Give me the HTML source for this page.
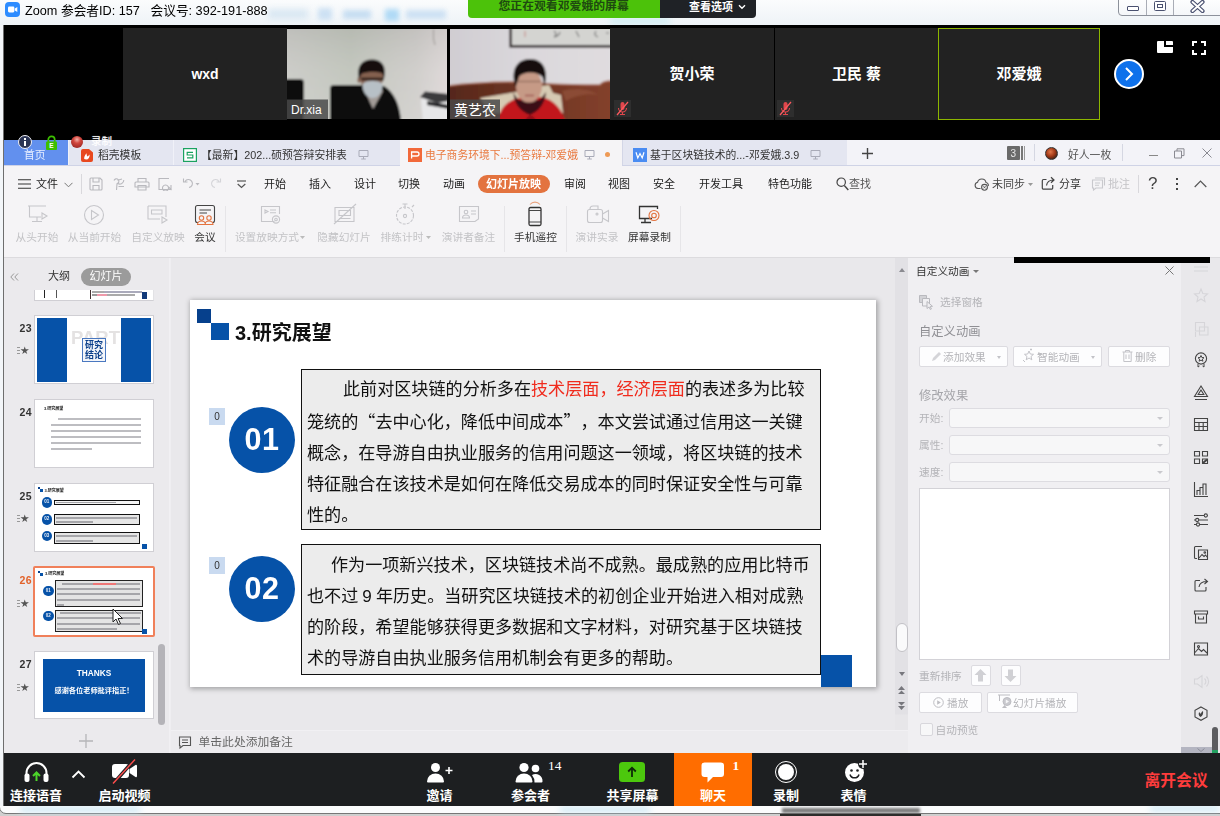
<!DOCTYPE html>
<html lang="zh-CN">
<head>
<meta charset="utf-8">
<title>Zoom</title>
<style>
*{box-sizing:border-box;margin:0;padding:0}
html,body{width:1220px;height:816px;overflow:hidden}
body{position:relative;background:#f3f6f9;font-family:"Liberation Sans","Noto Sans CJK SC",sans-serif;font-size:12px;color:#222}
.abs{position:absolute}
.t{position:absolute;white-space:nowrap;line-height:1}
/* ===== title bar ===== */
#titlebar{left:0;top:0;width:1220px;height:25px;background:linear-gradient(#fbfcfd,#eef3f7)}
/* ===== black area ===== */
#stage{left:3.500px;top:25px;width:1217px;height:115px;background:#000}
.tile{position:absolute;top:28px;height:91.500px;background:#222}
.tile .nm{position:absolute;left:0;right:0;top:37px;text-align:center;color:#fff;font-weight:bold;font-size:15px;line-height:18px}
/* ===== WPS ===== */
#wps{left:4px;top:140px;width:1216px;height:613px;background:#efeef1;overflow:hidden;filter:blur(.35px)}

/* WPS chrome */
#tabbar{left:0;top:0;width:1216px;height:26px;background:#e4e6f1;border-bottom:1px solid #cfd3e6}
.tab{position:absolute;top:0;height:25px}
.tabt{position:absolute;top:8.500px;font-size:10.8px;line-height:12px;white-space:nowrap;color:#333}
#menubar{left:0;top:26px;width:1216px;height:34px;background:#f5f4f6}
.mi{position:absolute;top:12px;font-size:11px;line-height:12px;white-space:nowrap;color:#222}
#ribbon{left:0;top:60px;width:1216px;height:58px;background:#f5f4f6;border-bottom:1px solid #dcdbde}
.rl{position:absolute;top:91px;font-size:10.7px;line-height:12px;white-space:nowrap;color:#c3c3c6;transform:translateX(-50%)}
.rl.on{color:#333}
.rsep{position:absolute;top:66px;width:1px;height:46px;background:#e6e5e8}
.ric{position:absolute;top:63px}

#left{left:0;top:118px;width:166px;height:495px;background:#ebeaed;border-right:1px solid #f1f0f3}
.th{position:absolute;left:30px;width:119.500px;height:68.500px;background:#fff;border:1px solid #d0cfd4;overflow:hidden}
.thn{position:absolute;left:15.500px;margin-top:1px;font-size:10.500px;line-height:11px;color:#333;font-weight:bold;letter-spacing:.3px}
.ths{position:absolute;left:16px;font-size:8.500px;line-height:11px;color:#555;margin-top:2px;left:16.500px}
.ths:before{content:"";position:absolute;left:-4px;top:2px;width:3px;height:1px;background:#999;box-shadow:0 3px 0 #999,0 6px 0 #999}
.bl{position:absolute;background:#0652a8}
.ln{position:absolute;height:1px;background:#9a9a9a}

#main{left:167px;top:118px;width:724px;height:495px;background:#e9e8eb}
#slide{left:19px;top:42px;width:686px;height:387px;background:#fff;box-shadow:1px 1px 5px 1px rgba(0,0,0,.3)}
.box{position:absolute;left:111px;width:520px;border:1px solid #111;background:#ececec;font-size:17.100px;line-height:31px;color:#111;padding:4px 0 0 5px;white-space:nowrap;text-spacing-trim:space-all}
.q{font-family:"Noto Sans CJK SC",sans-serif}
.circ{position:absolute;left:39px;width:66px;height:66px;border-radius:50%;background:#0652a8;color:#fff;font-weight:bold;font-size:30.500px;line-height:64px;text-align:center;font-family:"Liberation Sans",sans-serif;letter-spacing:.500px}
.tag{position:absolute;left:19px;width:16px;height:17px;background:#c9daf0;color:#333;font-size:10px;line-height:17px;text-align:center}
#notes{left:0;top:471.500px;width:737px;height:23.500px;background:#ecebee;border-top:1px solid #f1f0f3;z-index:2}

#vscroll{left:891px;top:118px;width:13px;height:471.500px;background:linear-gradient(#e2e1e5 0,#e2e1e5 456px,#e7e6e9 457px)}
#rpane{left:904px;top:118px;width:273px;height:495px;background:#f0eff2;color:#9a9a9e}
.rb{position:absolute;height:21px;background:#fdfdfe;border:1px solid #dcdbe0;border-radius:2px}
.rt{position:absolute;white-space:nowrap;line-height:12px;font-size:10.700px;color:#b4b4b8}
.sel{position:absolute;left:40.500px;width:221.500px;height:20px;background:#f7f7f8;border:1px solid #dddce1;border-radius:3px}
.sel:after{content:"";position:absolute;right:6px;top:8px;border:3px solid transparent;border-top:3.500px solid #c9c9cd}
#strip{left:1177px;top:118px;width:39px;height:495px;background:#e9e8eb}
/* ===== zoom toolbar ===== */
#ztb{left:4px;top:753px;width:1216px;height:53px;background:#1d1f21}

.zl{position:absolute;top:36px;font-size:13px;line-height:14px;font-weight:bold;color:#fff;white-space:nowrap;transform:translateX(-50%)}
.zn{position:absolute;font-family:"Liberation Serif",serif;color:#fff;font-size:13.500px;line-height:14px}
#frameb{left:0;top:806px;width:1220px;height:10px;background:#cfcfcf;overflow:hidden}
</style>
</head>
<body>
<div id="titlebar" class="abs">
  <div class="abs" style="left:268px;top:9px;width:40px;height:10px;background:#cfe2f0;filter:blur(3px);opacity:.7"></div>
  <div class="abs" style="left:318px;top:8px;width:14px;height:12px;background:#c4dcf2;filter:blur(2.500px);opacity:.8"></div>
  <div class="abs" style="left:343px;top:10px;width:28px;height:9px;background:#bcd8f0;filter:blur(2.500px);opacity:.8"></div>
  <div class="abs" style="left:385px;top:9px;width:14px;height:12px;background:#9fd3f5;filter:blur(2.500px);opacity:.8"></div>
  <div class="abs" style="left:406px;top:10px;width:40px;height:9px;background:#c4dcf2;filter:blur(2.500px);opacity:.8"></div>
  <div class="abs" style="left:610px;top:18px;width:60px;height:6px;background:#bfe9f0;filter:blur(3px);opacity:.7"></div>
  <svg class="abs" style="left:5px;top:2px" width="15" height="15" viewBox="0 0 15 15"><rect x="0" y="0" width="15" height="15" rx="4" fill="#2d8cff"/><rect x="3" y="4.6" width="6.4" height="5.8" rx="1.3" fill="#fff"/><path d="M9.9 6.6 L12.3 5 V10 L9.9 8.4Z" fill="#fff"/></svg>
  <div class="t" style="left:25px;top:4px;font-size:13px;color:#000;transform-origin:0 0;transform:scaleX(.976)">Zoom 参会者ID: 157 &nbsp;&nbsp;会议号: 392-191-888</div>
  <div class="abs" style="left:468px;top:0;width:192px;height:17.6px;background:#4cc20a;border-radius:0 0 0 4px"></div>
  <div class="abs" style="left:660px;top:0;width:96px;height:17.6px;background:#1f2226;border-radius:0 0 4px 0"></div>
  <div class="t" style="left:498.5px;top:1px;font-size:11.85px;font-weight:bold;color:#1e4a10">您正在观看邓爱娥的屏幕</div>
  <div class="t" style="left:689px;top:1.5px;font-size:11px;font-weight:bold;color:#fff">查看选项</div>
  <svg class="abs" style="left:738px;top:4px" width="8" height="6" viewBox="0 0 8 6"><path d="M1 1.2 L4 4.2 L7 1.2" stroke="#fff" stroke-width="1.4" fill="none"/></svg>
  <div class="abs" style="left:1118px;top:-4px;width:110px;height:19.600px;border:1px solid #8c919b;border-radius:0 0 4px 4px;background:linear-gradient(#fff,#f4f6f9)"></div>
  <div class="abs" style="left:1146px;top:0;width:1px;height:15px;background:#a9adb6"></div>
  <div class="abs" style="left:1173px;top:0;width:1px;height:15px;background:#a9adb6"></div>
  <div class="abs" style="left:1127px;top:6px;width:12px;height:5px;border:1.5px solid #4a5170;border-radius:1px;background:#fff"></div>
  <div class="abs" style="left:1154px;top:1px;width:12px;height:10px;border:1.5px solid #4a5170;border-radius:1.5px;background:#fff"></div>
  <div class="abs" style="left:1157px;top:4px;width:6px;height:4px;border:1.3px solid #4a5170;background:#fff"></div>
  <svg class="abs" style="left:1190px;top:0" width="15" height="13" viewBox="0 0 15 13"><path d="M2.500 2 L12.500 11 M12.500 2 L2.500 11" stroke="#4a5170" stroke-width="4.200" stroke-linecap="round"/><path d="M2.500 2 L12.500 11 M12.500 2 L2.500 11" stroke="#fff" stroke-width="1.800" stroke-linecap="round"/></svg>
</div>
<div id="stage" class="abs"></div>
<div class="abs" style="left:3px;top:25px;width:1px;height:781px;background:#6e6e6e"></div>
<div class="tile" style="left:123px;width:164px"><div class="nm" style="font-size:14px">wxd</div></div>
<div class="tile" id="vid1" style="left:287px;width:160px;background:#cfcfca;overflow:hidden;top:29px;height:90px">
<svg class="abs" style="left:0;top:0" width="160" height="90" viewBox="0 0 160 90">
<defs><linearGradient id="w1" x1="0" x2="1" y1="0" y2="0"><stop offset="0" stop-color="#cbcbc7"/><stop offset=".4" stop-color="#c1c5bc"/><stop offset=".8" stop-color="#cfcdca"/><stop offset="1" stop-color="#ded8d8"/></linearGradient>
<linearGradient id="w1v" x1="0" x2="0" y1="0" y2="1"><stop offset="0" stop-color="#000" stop-opacity=".06"/><stop offset=".5" stop-color="#fff" stop-opacity=".04"/><stop offset="1" stop-color="#fff" stop-opacity=".12"/></linearGradient>
<filter id="bl1" x="-5%" y="-5%" width="110%" height="110%"><feGaussianBlur stdDeviation=".9"/></filter></defs>
<g filter="url(#bl1)">
<rect x="-2" y="-2" width="164" height="94" fill="url(#w1)"/><rect x="-2" y="-2" width="164" height="94" fill="url(#w1v)"/>
<path d="M146.500 0 V10 L148 16" stroke="#9b9692" stroke-width="1" fill="none"/>
<path d="M-2 50 H13 a4 4 0 0 1 4 4 V92 H-2Z" fill="#0e0f11"/>
<path d="M43 92 V60 a4 4 0 0 1 4 -4 H76 V92Z" fill="#0b0d0c"/>
<path d="M58 92 C60 74 66 64 77 59 L97 57 C107 63 113 76 114 92Z" fill="#101111"/>
<path d="M78 62 L86 80 L96 62 L92 58 H80Z" fill="#a39c98"/>
<ellipse cx="84.500" cy="47" rx="12" ry="14" fill="#84604f"/><ellipse cx="72" cy="51" rx="1.500" ry="3" fill="#84604f"/>
<path d="M72 50 C69 37 75 30.500 85 30.500 C95 30.500 100 37 97 50 L95.500 44.500 C90 42.500 80 42.500 74.500 45Z" fill="#15110f"/>
<path d="M74 50 H97" stroke="#2a1d18" stroke-width="2.600"/>
<path d="M75.500 56 C76 52.500 82 52 85.500 52 C89 52 95 52.500 95.500 56 C95.500 63 91 69 85.500 69 C80 69 75.500 63 75.500 56Z" fill="#b7c0c6"/>
<path d="M134 72 L138 64 L162 66 V92 H136Z" fill="#e6e6e8"/>
<path d="M133 68 L138 62.500 L162 65 V72 L150 74Z" fill="#3a3a3c"/>
<path d="M140 72 L162 76 V80 L140 76Z" fill="#1f1f22"/>
</g>
<rect x="0" y="70.500" width="41" height="19.500" fill="#4a4a4a" fill-opacity=".85"/>
<text x="4" y="85" font-family="Liberation Sans, sans-serif" font-size="12" fill="#fff">Dr.xia</text>
</svg></div>
<div class="tile" id="vid2" style="left:450px;width:160px;background:#dcdcdc;overflow:hidden;top:29px;height:90px">
<svg class="abs" style="left:0;top:0" width="160" height="90" viewBox="0 0 160 90">
<defs><linearGradient id="w2" x1="0" x2="1" y1="0" y2="0"><stop offset="0" stop-color="#d0cdd2"/><stop offset=".5" stop-color="#dbd8dc"/><stop offset="1" stop-color="#e0dcdf"/></linearGradient>
<linearGradient id="sf" x1="0" x2="1" y1="0" y2="0"><stop offset="0" stop-color="#55271a"/><stop offset=".3" stop-color="#663020"/><stop offset=".75" stop-color="#783a26"/><stop offset="1" stop-color="#84412d"/></linearGradient>
<filter id="bl2" x="-5%" y="-5%" width="110%" height="110%"><feGaussianBlur stdDeviation=".9"/></filter></defs>
<g filter="url(#bl2)">
<rect x="-2" y="-2" width="164" height="94" fill="url(#w2)"/>
<rect x="60.700" y="-3" width="104" height="20.300" fill="#d4d4d1" stroke="#2b2424" stroke-width="2.600"/>
<path d="M75 2 V8" stroke="#c9a09a" stroke-width="1.500"/><path d="M104 2 q4 3 0 6 q5 -1 6 -5 M126 2 l3 6 M146 2 q-3 4 2 6 M156 4 h3" stroke="#777" stroke-width="1.200" fill="none"/>
<path d="M-2 57 C20 54 50 53 70 53 L100 55 C120 56 140 56 150 56 C152 53 158 52 162 52 V92 H-2Z" fill="url(#sf)"/>
<path d="M-2 57 C20 54 50 53 70 53 L100 55 C120 56 140 56 150 56 C152 53 158 52 162 52" stroke="#a2604a" stroke-width="1.600" fill="none"/>
<path d="M112 62 C125 58 140 60 148 66 C140 64 125 66 116 72Z" fill="#93533c" fill-opacity=".7"/>
<path d="M30 69 L66 63 L92 57 L99 56 L103 64 L111 66 L113 84 L40 84Z" fill="#d6cab3"/>
<path d="M48 92 C50 78 58 72 68 69 L92 68 C104 71 112 80 115 92Z" fill="#c2161f"/>
<path d="M63.500 64 C64 76 72 83 80 86 C89 82 95 75 96 63 L90 71 H68Z" fill="#3b0e14"/>
<ellipse cx="79" cy="57" rx="13" ry="16.500" fill="#c69a86"/>
<path d="M65.500 58 C60 41 67 30 80 30 C93 30 99 41 94.500 57 L92.500 48 C86 42 75 42.500 69.500 47 L67 54Z" fill="#16100f"/>
<path d="M68 52.500 H91" stroke="#8d6a5c" stroke-width="1.200"/>
<path d="M75 66.500 H84" stroke="#9a4a48" stroke-width="1.300"/>
<path d="M86 92 C84 86 80 84 76 90 L75 92Z" fill="#8e0f18"/>
</g>
<rect x="0" y="70.500" width="50" height="19.500" fill="#4a4a4a" fill-opacity=".85"/>
<text x="4" y="86" font-family="Noto Sans CJK SC, sans-serif" font-size="14" fill="#fff">黄艺农</text>
</svg></div>
<div class="tile" style="left:610px;width:164px"><div class="nm">贺小荣</div></div>
<div class="tile" style="left:775px;width:163px"><div class="nm">卫民 蔡</div></div>
<div class="tile" style="left:938px;width:162px;border:1px solid #8db600"><div class="nm" style="top:36px">邓爱娥</div></div>
<div class="abs" style="left:1114px;top:59px;width:30px;height:30px;border-radius:50%;background:#0e71eb;border:2px solid #fff"></div>
<svg class="abs" style="left:1123px;top:66px" width="12" height="16" viewBox="0 0 12 16"><path d="M3 2 L9 8 L3 14" stroke="#fff" stroke-width="2" fill="none"/></svg>
<svg class="abs" style="left:1157px;top:41px" width="16" height="12" viewBox="0 0 16 12"><path d="M1 0 H7 V6 H16 V11 a1 1 0 0 1 -1 1 H1 a1 1 0 0 1 -1 -1 V1 a1 1 0 0 1 1 -1Z" fill="#fff"/><path d="M9 0 H15 a1 1 0 0 1 1 1 V4 H9Z" fill="#fff"/></svg>
<svg class="abs" style="left:1192px;top:41px" width="14" height="14" viewBox="0 0 14 14"><path d="M1 5 V1 H5 M9 1 H13 V5 M13 9 V13 H9 M5 13 H1 V9" stroke="#fff" stroke-width="2" fill="none"/></svg>
<div id="wps" class="abs">
<div id="tabbar" class="abs">
  <div class="tab" style="left:0;width:64px;background:#6290ee"></div>
  <div class="tabt" style="left:20px;color:#e6eeff">首页</div>
  <div class="tab" style="left:64px;width:106px;border-right:1px solid #f0f1f8;border-left:1px solid #f0f1f8"></div>
  <svg class="abs" style="left:77px;top:9px" width="12" height="13" viewBox="0 0 12 13"><path d="M2 0 H8 L12 3.5 V11 a2 2 0 0 1 -2 2 H2 a2 2 0 0 1 -2 -2 V2 a2 2 0 0 1 2 -2Z" fill="#e8481f"/><path d="M3.2 10 C3 7.5 4 6 5.6 4.2 C5.6 6 6 7 6.6 7.6 C7.3 6.8 8 5.8 8.6 5.4 C9 8 7.5 10.3 5.2 10.6Z" fill="#fff"/></svg>
  <div class="tabt" style="left:94px">稻壳模板</div>
  <div class="tab" style="left:170px;width:226px"></div>
  <svg class="abs" style="left:179px;top:8px" width="14" height="14" viewBox="0 0 14 14"><rect x=".6" y=".6" width="12.8" height="12.8" fill="#fff" stroke="#1aa260" stroke-width="1.2"/><path d="M10 4.3 H4.2 V7 H9.8 V9.8 H4" stroke="#1aa260" stroke-width="1.2" fill="none"/></svg>
  <div class="tabt" style="left:197px">【最新】202...硕预答辩安排表</div>
  <svg class="abs mon" style="left:354px;top:9px" width="11" height="11" viewBox="0 0 11 11"><path d="M1 1.5 H10 V7.5 H1Z M5.5 7.5 V10 M3.2 10 H7.8" stroke="#a9abb8" stroke-width="1" fill="none"/></svg>
  <div class="tab" style="left:396px;width:222px;height:27px;background:#f5f4f6"></div>
  <svg class="abs" style="left:404px;top:8px" width="14" height="14" viewBox="0 0 14 14"><rect width="14" height="14" fill="#f2693a"/><path d="M3.6 10.5 V4 H9 a1.8 1.8 0 0 1 0 4 H3.6" stroke="#fff" stroke-width="1.3" fill="none"/></svg>
  <div class="tabt" style="left:421px;color:#e9793f">电子商务环境下...预答辩-邓爱娥</div>
  <svg class="abs mon" style="left:580px;top:9px" width="11" height="11" viewBox="0 0 11 11"><path d="M1 1.5 H10 V7.5 H1Z M5.5 7.5 V10 M3.2 10 H7.8" stroke="#a9abb8" stroke-width="1" fill="none"/></svg>
  <div class="abs" style="left:601px;top:12px;width:5px;height:5px;border-radius:50%;background:#ee9a55"></div>
  <div class="tab" style="left:618px;width:225px;border-left:1px solid #d3d6e6"></div>
  <svg class="abs" style="left:629px;top:8px" width="14" height="14" viewBox="0 0 14 14"><rect width="14" height="14" fill="#4a8cf2"/><path d="M3 4.2 L4.8 10 L7 5.5 L9.2 10 L11 4.2" stroke="#fff" stroke-width="1.2" fill="none"/></svg>
  <div class="tabt" style="left:646px">基于区块链技术的...-邓爱娥.3.9</div>
  <svg class="abs mon" style="left:806px;top:9px" width="11" height="11" viewBox="0 0 11 11"><path d="M1 1.5 H10 V7.5 H1Z M5.5 7.5 V10 M3.2 10 H7.8" stroke="#a9abb8" stroke-width="1" fill="none"/></svg>
  <div class="tab" style="left:843px;width:373px;background:#f3f3f8"></div>
  <svg class="abs" style="left:858px;top:8px" width="11" height="11" viewBox="0 0 11 11"><path d="M5.5 0 V11 M0 5.5 H11" stroke="#444" stroke-width="1.4"/></svg>
  <div class="abs" style="left:1003px;top:6px;width:13px;height:14px;background:#6a6a6a;border-radius:1px"></div>
  <div class="t" style="left:1006.5px;top:8.5px;font-size:10px;color:#e8e8e8">3</div>
  <div class="abs" style="left:1017px;top:6px;width:1.5px;height:14px;background:#777"></div>
  <div class="abs" style="left:1020px;top:6px;width:1px;height:14px;background:#999"></div>
  <div class="abs" style="left:1030px;top:4px;width:1px;height:17px;background:#d5d7e2"></div>
  <div class="abs" style="left:1041px;top:7px;width:13px;height:13px;border-radius:50%;background:radial-gradient(circle at 40% 35%,#e0774a 0,#a33a18 45%,#2a1a14 90%);border:1px solid #333"></div>
  <div class="tabt" style="left:1064px;color:#555">好人一枚</div>
  <div class="abs" style="left:1118px;top:4px;width:1px;height:17px;background:#d5d7e2"></div>
  <div class="abs" style="left:1145px;top:15px;width:9px;height:1px;background:#888"></div>
  <svg class="abs" style="left:1170px;top:8px" width="11" height="11" viewBox="0 0 11 11"><path d="M.5 3 H7.5 V10 H.5Z M3 3 V.8 H10 V7.6 H7.5" stroke="#8a8a92" stroke-width="1" fill="none"/></svg>
  <svg class="abs" style="left:1198px;top:8px" width="10" height="10" viewBox="0 0 10 10"><path d="M.5 .5 L9.5 9.5 M9.5 .5 L.5 9.5" stroke="#8a8a92" stroke-width="1"/></svg>
</div>
<div id="menubar" class="abs">
  <svg class="abs" style="left:14px;top:13px" width="13" height="10" viewBox="0 0 13 10"><path d="M0 .7 H13 M0 5 H13 M0 9.3 H13" stroke="#333" stroke-width="1.1"/></svg>
  <div class="mi" style="left:32px">文件</div>
  <svg class="abs" style="left:60px;top:16px" width="9" height="6" viewBox="0 0 9 6"><path d="M.5 .8 L4.5 4.8 L8.5 .8" stroke="#777" stroke-width="1" fill="none"/></svg>
  <div class="abs" style="left:77px;top:8px;width:1px;height:20px;background:#d9d8dc"></div>
  <svg class="abs" style="left:85px;top:11px" width="160" height="14" viewBox="0 0 160 14" fill="none" stroke="#b9b9be" stroke-width="1.1"><path d="M1 2 a1 1 0 0 1 1 -1 H11 L13 3 V12 a1 1 0 0 1 -1 1 H2 a1 1 0 0 1 -1 -1Z M4 1 V5 H10 V1 M4 13 V8.5 H10 V13"/><path d="M25 3.5 a2.5 2.5 0 1 1 3 3.2 L27.5 13 M28.5 3.2 L33 2 M28.8 6.5 a4 4 0 0 0 6 -3.5 M29.5 9.5 H35"/><path d="M47 5 H59 a1 1 0 0 1 1 1 V10 H46 V6 a1 1 0 0 1 1 -1Z M49 5 V1.5 H57 V5 M49 8.5 H57 V13 H49Z"/><path d="M82 8 V12.5 H70 V1.5 H80 M76.5 8 a3 3 0 1 0 .01 0 M79.5 9.8 L82.5 13" /><path d="M100 10.5 a4 4 0 1 0 -4 -6 M94.5 1.5 V5 H98.5"/><path d="M106.5 6 L108.5 8.5 L110.5 6Z" fill="#b9b9be" stroke="none"/><path d="M126 10.5 a4 4 0 1 1 4 -6 M131.5 1.5 V5 H127.5" stroke="#d4d4d8"/><path d="M148 4 H157" stroke="#555" stroke-width="1.2"/><path d="M148.7 7 L152.5 10.5 L156.3 7" stroke="#555" stroke-width="1.2"/></svg>
  <div class="mi" style="left:260px">开始</div>
  <div class="mi" style="left:305px">插入</div>
  <div class="mi" style="left:350px">设计</div>
  <div class="mi" style="left:394px">切换</div>
  <div class="mi" style="left:439px">动画</div>
  <div class="abs" style="left:474px;top:9px;width:72px;height:18px;border-radius:9px;background:#e3733f"></div>
  <div class="mi" style="left:482px;color:#fff;font-weight:bold;font-size:11px">幻灯片放映</div>
  <div class="mi" style="left:560px">审阅</div>
  <div class="mi" style="left:604px">视图</div>
  <div class="mi" style="left:649px">安全</div>
  <div class="mi" style="left:695px">开发工具</div>
  <div class="mi" style="left:764px">特色功能</div>
  <svg class="abs" style="left:832px;top:11px" width="13" height="14" viewBox="0 0 13 14"><circle cx="5.2" cy="5.2" r="4.2" stroke="#444" stroke-width="1.2" fill="none"/><path d="M8.3 8.5 L12.3 13" stroke="#444" stroke-width="1.4"/></svg>
  <div class="mi" style="left:845px;color:#555">查找</div>
  <svg class="abs" style="left:970px;top:11px" width="16" height="14" viewBox="0 0 16 14" fill="none" stroke="#555" stroke-width="1.1"><path d="M6.5 11.5 H4 a3.2 3.2 0 0 1 -.4 -6.3 a4.3 4.3 0 0 1 8.4 .3 a2.8 2.8 0 0 1 2.3 3.5"/><circle cx="10.5" cy="10.3" r="2.9"/><path d="M9.4 9.2 L11.6 11.4 M11.6 9.2 L9.4 11.4" stroke-width=".9"/></svg>
  <div class="mi" style="left:988px;color:#444">未同步</div>
  <svg class="abs" style="left:1024px;top:16.5px" width="5" height="3" viewBox="0 0 5 3"><path d="M0 0 H5 L2.5 3Z" fill="#999"/></svg>
  <svg class="abs" style="left:1037px;top:10px" width="15" height="15" viewBox="0 0 15 15" fill="none" stroke="#444" stroke-width="1.2"><path d="M5.5 3.5 H2.5 a1.2 1.2 0 0 0 -1.200 1.200 V12 a1.2 1.2 0 0 0 1.200 1.200 H10.500 a1.2 1.2 0 0 0 1.200 -1.200 V9"/><path d="M5.500 9.500 C6 6 8.500 4 12.500 4 M10 1.200 L13 4 L10 6.800"/></svg>
  <div class="mi" style="left:1055px;color:#333">分享</div>
  <svg class="abs" style="left:1087px;top:11px" width="15" height="14" viewBox="0 0 15 14" fill="none" stroke="#c9c9cd" stroke-width="1.1"><path d="M1.500 3 H11.500 V11 H5 L2.500 13 V11 H1.500Z M4 1 H13.500 V8.500"/><path d="M4 6 H9 M4 8.300 H8"/></svg>
  <div class="mi" style="left:1104px;color:#c3c3c6">批注</div>
  <div class="abs" style="left:1134px;top:9px;width:1px;height:18px;background:#d9d8dc"></div>
  <div class="t" style="left:1144px;top:9px;font-size:17px;color:#444;font-family:'Liberation Sans',sans-serif">?</div>
  <div class="abs" style="left:1172px;top:12px;width:2px;height:2px;background:#444;box-shadow:0 5px 0 #444,0 10px 0 #444"></div>
  <svg class="abs" style="left:1190px;top:14px" width="13" height="8" viewBox="0 0 13 8"><path d="M.7 7 L6.500 1.200 L12.300 7" stroke="#555" stroke-width="1.2" fill="none"/></svg>
</div>
<div id="ribbon" class="abs"></div>
<svg class="abs" style="left:0;top:60px" width="700" height="34" viewBox="0 0 700 34" fill="none" stroke="#c6c6ca" stroke-width="1.1">
  <!-- 从头开始 cx=33 -->
  <path d="M24 6 H42 M25.500 6 V17 H37 M33 17 V21 M28 21.500 H38"/><path d="M38 13 L43 16 L38 19Z"/>
  <!-- 从当前开始 cx=90 -->
  <circle cx="90" cy="15" r="9.500"/><path d="M87.500 10.500 L94.500 15 L87.500 19.500Z"/>
  <!-- 自定义放映 cx=153 -->
  <path d="M144 6 H162 V17 M144 6 V19 H156"/><path d="M147.500 10 H158 V14 H147.500Z"/><path d="M158 17 L163 20 L158 23Z"/>
  <!-- 会议 cx=201 -->
  <g stroke="#444"><rect x="191.500" y="5.500" width="19" height="17" rx="2"/><path d="M195.500 10 H207 M195.500 13 H203"/></g>
  <g stroke="#e3733f" fill="#f5f4f6"><circle cx="197.500" cy="18" r="2.200"/><circle cx="205" cy="18" r="2.200"/><path d="M193.500 24.500 a4 3.500 0 0 1 8 0Z M201 24.500 a4 3.500 0 0 1 8 0Z"/></g>
  <!-- 设置放映方式 cx=266 -->
  <path d="M270.500 21.500 H257.500 V6.500 H275.500 V14"/><path d="M261 10 L264 11.500 L261 13Z M266 10 H272 M266 12.800 H272"/><circle cx="272" cy="19.500" r="3.600"/><circle cx="272" cy="19.500" r="1.300"/>
  <!-- 隐藏幻灯片 cx=340 -->
  <path d="M331 7.500 H350 V21.500 H331Z M335 10.500 H346.500 V15.500 H335Z M335 18.500 H346.500"/><path d="M330 24 L352 4"/>
  <!-- 排练计时 cx=401 -->
  <circle cx="401" cy="15.500" r="8.500" stroke-dasharray="3 1.200"/><circle cx="401" cy="16" r="1.600"/><path d="M401 4 V9 M398.500 4 H403.500 M408 7 L410 5"/>
  <!-- 演讲者备注 cx=465 -->
  <path d="M455.500 6.500 H474.500 V19 L471 21.500 H455.500Z"/><circle cx="462" cy="12" r="1.800"/><path d="M458.500 18 a3.500 3 0 0 1 7 0Z M467 11 H472 M467 14 H472"/>
  <!-- 手机遥控 cx=531 -->
  <g stroke="#333" stroke-width="1.300"><rect x="525" y="7.500" width="12" height="18" rx="1.500"/><path d="M525 10.500 H537 M525 22 H537" stroke-width=".9"/></g><path d="M526 4.500 a6.500 6.500 0 0 1 10 0" stroke="#e9a480"/>
  <!-- 演讲实录 cx=593 -->
  <rect x="583.500" y="9.500" width="15" height="13" rx="2"/><path d="M598.500 14 L604.500 10.500 V21.500 L598.500 18"/><path d="M586 9 a3 3 0 0 1 3 -3 H594 V9"/><circle cx="593" cy="14" r="1"/>
  <!-- 屏幕录制 cx=645 -->
  <g stroke="#333" stroke-width="1.300"><path d="M648 18.500 H635.500 V6.500 H653.500 V9"/><path d="M641 18.500 V22.500 M637 22.500 H647"/></g>
  <g stroke="#e3733f"><circle cx="650" cy="15.500" r="5"/><circle cx="650" cy="15.500" r="2.300"/></g>
</svg>
<div class="rl" style="left:33px">从头开始</div>
<div class="rl" style="left:90.500px">从当前开始</div>
<div class="rl" style="left:154px">自定义放映</div>
<div class="rl on" style="left:201px">会议</div>
<div class="rsep" style="left:221px"></div>
<div class="rl" style="left:263px">设置放映方式</div>
<svg class="abs" style="left:296px;top:96px" width="5" height="3" viewBox="0 0 5 3"><path d="M0 0 H5 L2.500 3Z" fill="#bbb"/></svg>
<div class="rl" style="left:340px">隐藏幻灯片</div>
<div class="rl" style="left:398px">排练计时</div>
<svg class="abs" style="left:422px;top:96px" width="5" height="3" viewBox="0 0 5 3"><path d="M0 0 H5 L2.500 3Z" fill="#bbb"/></svg>
<div class="rl" style="left:464.500px">演讲者备注</div>
<div class="rsep" style="left:500px"></div>
<div class="rl on" style="left:531.500px">手机遥控</div>
<div class="rsep" style="left:562px"></div>
<div class="rl" style="left:593px">演讲实录</div>
<div class="rl on" style="left:645.500px">屏幕录制</div>
<div class="rsep" style="left:676px"></div>
<div id="left" class="abs">
  <svg class="abs" style="left:6px;top:15px" width="9" height="8" viewBox="0 0 9 8"><path d="M4 .500 L.800 4 L4 7.500 M8 .500 L4.800 4 L8 7.500" stroke="#999" stroke-width="1" fill="none"/></svg>
  <div class="t" style="left:44px;top:13px;font-size:11px;color:#333">大纲</div>
  <div class="abs" style="left:77px;top:10px;width:50px;height:18px;border-radius:9px;background:#9b9b9b"></div>
  <div class="t" style="left:85.500px;top:13px;font-size:11px;color:#fff">幻灯片</div>
  <!-- 22 -->
  <div class="th" style="top:20px;height:23px;border-top:none;clip-path:inset(12px 0 0 0)">
    <div class="abs" style="left:9px;top:12px;width:1px;height:8px;background:#222"></div><div class="abs" style="left:21px;top:12px;width:1px;height:8px;background:#555"></div><div class="abs" style="left:55px;top:12px;width:1px;height:8.5px;background:#433"></div>
    <div class="ln" style="left:57px;top:12.6px;width:12px;height:2px;background:#aaa"></div><div class="ln" style="left:69px;top:12.6px;width:38px;height:2px;background:#aab"></div><div class="ln" style="left:57px;top:15.8px;width:5px;height:2px;background:#999"></div><div class="ln" style="left:62px;top:15.8px;width:10px;height:2px;background:#e9a"></div><div class="ln" style="left:72px;top:15.8px;width:28px;height:2px;background:#aaa"></div>
    <div class="abs" style="left:107px;top:14px;width:5px;height:6.5px;background:#123a7a"></div>
  </div>
  <!-- 23 -->
  <div class="thn" style="top:64px">23</div><div class="ths" style="top:85px">★</div>
  <div class="th" style="top:57px">
    <div class="bl" style="left:2px;top:2px;width:30px;height:64px"></div><div class="bl" style="left:86px;top:2px;width:30px;height:64px"></div>
    <div class="t" style="left:36px;top:13px;font-size:18.5px;font-weight:bold;color:#e4e2e2;letter-spacing:0;font-family:'Liberation Sans',sans-serif">PART</div>
    <div class="abs" style="left:47px;top:22px;width:24px;height:24px;border:1px solid #4a78c0;background:#f4f6fa"></div>
    <div class="t" style="left:50px;top:24px;font-size:9px;line-height:10px;color:#0b3f8a;font-weight:bold;white-space:normal;width:20px">研究结论</div>
  </div>
  <!-- 24 -->
  <div class="thn" style="top:148px">24</div>
  <div class="th" style="top:141px">
    <div class="t" style="left:9px;top:7px;font-size:4px;font-weight:bold;color:#222">3.研究展望</div>
    <div class="ln" style="left:22.5px;top:18px;width:83px;height:2.2px;background:#bdbdc1"></div><div class="ln" style="left:16px;top:24.2px;width:90px;height:2.2px;background:#bdbdc1"></div><div class="ln" style="left:16px;top:30.1px;width:90px;height:2.2px;background:#bdbdc1"></div><div class="ln" style="left:16px;top:35.9px;width:90px;height:2.2px;background:#bdbdc1"></div><div class="ln" style="left:16px;top:42.1px;width:90px;height:2.2px;background:#bdbdc1"></div><div class="ln" style="left:16px;top:48.2px;width:41px;height:2.2px;background:#bdbdc1"></div>
  </div>
  <!-- 25 -->
  <div class="thn" style="top:232px">25</div><div class="ths" style="top:253px">★</div>
  <div class="th" style="top:225px">
    <div class="abs" style="left:3px;top:2.5px;width:2px;height:2px;background:#06408c"></div><div class="abs" style="left:5px;top:4.5px;width:3px;height:3px;background:#0652a8"></div>
    <div class="t" style="left:9.5px;top:4.5px;font-size:4px;font-weight:bold;color:#222">3.研究展望</div>
    <div class="abs" style="left:6.7px;top:13.1px;width:10.6px;height:10.6px;border-radius:50%;background:#0652a8"></div><div class="t" style="left:9.3px;top:16.1px;font-size:4.5px;font-weight:bold;color:#e8eef8">01</div><div class="abs" style="left:18.7px;top:15.7px;width:86px;height:5.4px;border:1px solid #111;background:#f4f4f4"></div><div class="ln" style="left:21px;top:17.6px;width:60px;height:1.6px;background:#a6a6aa"></div>
    <div class="abs" style="left:6.7px;top:30.1px;width:10.6px;height:10.6px;border-radius:50%;background:#0652a8"></div><div class="t" style="left:9.3px;top:33.1px;font-size:4.5px;font-weight:bold;color:#e8eef8">02</div><div class="abs" style="left:18.7px;top:30.1px;width:86px;height:10.9px;border:1px solid #111;background:#e6e6e6"></div><div class="ln" style="left:21px;top:32.6px;width:81px;height:2px;background:#a6a6aa"></div><div class="ln" style="left:21px;top:37.3px;width:37px;height:2px;background:#a6a6aa"></div>
    <div class="abs" style="left:6.7px;top:46.9px;width:10.6px;height:10.6px;border-radius:50%;background:#0652a8"></div><div class="t" style="left:9.3px;top:49.9px;font-size:4.5px;font-weight:bold;color:#e8eef8">03</div><div class="abs" style="left:18.7px;top:48px;width:86px;height:11.6px;border:1px solid #111;background:#e6e6e6"></div><div class="ln" style="left:21px;top:50.7px;width:81px;height:2px;background:#a6a6aa"></div><div class="ln" style="left:21px;top:55.8px;width:37px;height:2px;background:#a6a6aa"></div>
    <div class="abs" style="left:106.8px;top:60px;width:5.2px;height:5.2px;background:#0652a8"></div>
  </div>
  <!-- 26 -->
  <div class="thn" style="top:316px;color:#e2622a">26</div><div class="ths" style="top:338px">★</div>
  <div class="th" style="top:307.500px;left:29px;width:122px;height:71px;border:2px solid #f0805a;border-radius:2px">
    <div class="abs" style="left:3px;top:3px;width:2px;height:2px;background:#06408c"></div><div class="abs" style="left:5px;top:5px;width:3px;height:3px;background:#0652a8"></div>
    <div class="t" style="left:10px;top:4px;font-size:4px;font-weight:bold;color:#222">3.研究展望</div>
    <div class="abs" style="left:8.2px;top:18.4px;width:10.6px;height:10.6px;border-radius:50%;background:#0652a8"></div><div class="t" style="left:10.799999999999999px;top:21.4px;font-size:4.5px;font-weight:bold;color:#e8eef8">01</div>
    <div class="abs" style="left:20px;top:12px;width:88px;height:27px;border:1px solid #222;background:#e4e4e4"></div>
    <div class="ln" style="left:27px;top:15.4px;width:31px;height:2.2px;background:#a6a6aa"></div><div class="ln" style="left:58px;top:15.4px;width:23px;height:2.2px;background:#ee7777"></div><div class="ln" style="left:81px;top:15.4px;width:24px;height:2.2px;background:#a6a6aa"></div><div class="ln" style="left:22px;top:20.4px;width:83px;height:2.2px;background:#a6a6aa"></div><div class="ln" style="left:22px;top:25.7px;width:83px;height:2.2px;background:#a6a6aa"></div><div class="ln" style="left:22px;top:31px;width:83px;height:2.2px;background:#a6a6aa"></div><div class="ln" style="left:22px;top:36.2px;width:7px;height:2.2px;background:#a6a6aa"></div>
    <div class="abs" style="left:8.2px;top:43.4px;width:10.6px;height:10.6px;border-radius:50%;background:#0652a8"></div><div class="t" style="left:10.799999999999999px;top:46.4px;font-size:4.5px;font-weight:bold;color:#e8eef8">02</div>
    <div class="abs" style="left:20px;top:42px;width:88px;height:22px;border:1px solid #222;background:#e4e4e4"></div>
    <div class="ln" style="left:25px;top:44.4px;width:81px;height:2.2px;background:#a6a6aa"></div><div class="ln" style="left:22px;top:49.8px;width:83px;height:2.2px;background:#a6a6aa"></div><div class="ln" style="left:22px;top:55.1px;width:83px;height:2.2px;background:#a6a6aa"></div><div class="ln" style="left:22px;top:60.4px;width:60px;height:2.2px;background:#a6a6aa"></div>
    <div class="abs" style="left:107px;top:61px;width:5px;height:5px;background:#0652a8"></div>
  </div>
  <svg class="abs" style="left:108px;top:350px" width="12" height="18" viewBox="0 0 12 18"><path d="M1 1 L1 14 L4 11 L6.500 16.500 L8.500 15.500 L6 10.500 L10.500 10.500Z" fill="#fff" stroke="#222" stroke-width="1"/></svg>
  <!-- 27 -->
  <div class="thn" style="top:400px">27</div><div class="ths" style="top:422px">★</div>
  <div class="th" style="top:392.500px">
    <div class="bl" style="left:8px;top:7px;width:102px;height:53px"></div>
    <div class="t" style="left:0;width:118px;text-align:center;top:17px;font-size:8.3px;font-weight:bold;color:#fff;font-family:'Liberation Sans',sans-serif">THANKS</div>
    <div class="t" style="left:0;width:118px;text-align:center;top:35px;font-size:7.2px;font-weight:bold;color:#fff;text-spacing-trim:space-all">感谢各位老师批评指正！</div>
  </div>
  <div class="abs" style="left:154px;top:386px;width:7px;height:81px;border-radius:3.500px;background:#b4b3b8"></div>
  <svg class="abs" style="left:75px;top:476px" width="14" height="14" viewBox="0 0 14 14"><path d="M7 0 V14 M0 7 H14" stroke="#b5b5b8" stroke-width="1.300"/></svg>
</div>
<div id="main" class="abs">
  <div id="slide" class="abs">
    <div class="abs" style="left:7px;top:8.500px;width:14px;height:14px;background:#06408c"></div>
    <div class="abs" style="left:21px;top:22.500px;width:18px;height:17.500px;background:#0652a8"></div>
    <div class="t" style="left:45px;top:23px;font-size:20px;font-weight:bold;color:#111">3.研究展望</div>
    <div class="tag" style="top:108px">0</div>
    <div class="circ" style="top:106.500px">01</div>
    <div class="box" style="top:69px;height:161px;text-indent:36px">此前对区块链的分析多在<span style="color:#f02b1d">技术层面，经济层面</span>的表述多为比较<br>笼统的<span class="q">“</span>去中心化，降低中间成本<span class="q">”</span>，本文尝试通过信用这一关键<br>概念，在导游自由执业服务的信用问题这一领域，将区块链的技术<br>特征融合在该技术是如何在降低交易成本的同时保证安全性与可靠<br>性的。</div>
    <div class="tag" style="top:257px">0</div>
    <div class="circ" style="top:255.500px">02</div>
    <div class="box" style="top:244px;height:131px;padding-top:5px;text-indent:24px">作为一项新兴技术，区块链技术尚不成熟。最成熟的应用比特币<br><span style="word-spacing:-.700px">也不过 9 年历史</span>。当研究区块链技术的初创企业开始进入相对成熟<br>的阶段，希望能够获得更多数据和文字材料，对研究基于区块链技<br>术的导游自由执业服务信用机制会有更多的帮助。</div>
    <div class="abs" style="left:631px;top:355px;width:30.500px;height:32px;background:#0652a8"></div>
  </div>
  <div id="notes" class="abs">
    <svg class="abs" style="left:6.500px;top:5.500px" width="14" height="13" viewBox="0 0 14 13" fill="none" stroke="#555" stroke-width="1.100"><path d="M1.500 1 H12.500 V9.500 H5 L2 12 V9.500 H1.500Z M4 4 H10 M4 6.500 H10"/></svg>
    <div class="t" style="left:27.500px;top:6px;font-size:11.800px;color:#666">单击此处添加备注</div>
  </div>
</div>
<div id="vscroll" class="abs">
  <div class="abs" style="left:4px;top:10px;border:3px solid transparent;border-bottom:4px solid #8a8a90;border-top:none"></div>
  <div class="abs" style="left:.500px;top:365px;width:12px;height:28.500px;border-radius:6px;background:#fafafb;border:1px solid #c2c1c6"></div>
  <div class="abs" style="left:4px;top:414px;border:3px solid transparent;border-top:4px solid #77777d;border-bottom:none"></div>
  <svg class="abs" style="left:3px;top:428px" width="7" height="8" viewBox="0 0 7 8"><path d="M0 4 L3.500 0 L7 4Z M0 8 L3.500 4.500 L7 8Z" fill="#77777d"/></svg>
  <svg class="abs" style="left:3px;top:444px" width="7" height="8" viewBox="0 0 7 8"><path d="M0 0 L3.500 3.500 L7 0Z M0 4 L3.500 8 L7 4Z" fill="#77777d"/></svg>
</div>
<div id="rpane" class="abs">
    <div class="rt" style="left:8px;top:7px;color:#333">自定义动画</div>
  <div class="abs" style="left:65px;top:12px;border:3px solid transparent;border-top:3.500px solid #777;border-bottom:none"></div>
  <svg class="abs" style="left:257px;top:8px" width="9" height="9" viewBox="0 0 9 9"><path d="M.500 .500 L8.500 8.500 M8.500 .500 L.500 8.500" stroke="#777" stroke-width="1"/></svg>
  <svg class="abs" style="left:11px;top:37px" width="15" height="15" viewBox="0 0 15 15" fill="none" stroke="#b9b9be" stroke-width="1"><path d="M.500 .500 H7.500 V7.500 H.500Z" fill="#d2d2d6"/><path d="M3.500 3.500 H10.500 V11 H3.500Z" fill="#f0eff2"/><path d="M8 6.500 L8 13.500 L10 12 L11.300 14.500 L12.400 14 L11.200 11.500 L13.500 11.300Z" fill="#f0eff2"/></svg>
  <div class="rt" style="left:32px;top:38px">选择窗格</div>
  <div class="rt" style="left:11px;top:67px;font-size:12.300px;color:#8f8f94;line-height:14px">自定义动画</div>
  <div class="rb" style="left:11px;top:88px;width:89px"></div>
  <svg class="abs" style="left:23px;top:93px" width="11" height="11" viewBox="0 0 11 11"><path d="M1 10 L2 7 L8 1 L10 3 L4 9Z" fill="#d4d4d8"/></svg>
  <div class="rt" style="left:35px;top:93px">添加效果</div>
  <div class="abs" style="left:89px;top:98px;border:2.500px solid transparent;border-top:3px solid #c3c3c8;border-bottom:none"></div>
  <div class="rb" style="left:105px;top:88px;width:89px"></div>
  <svg class="abs" style="left:114px;top:90px" width="13" height="15" viewBox="0 0 13 15" fill="none" stroke="#c3c3c8" stroke-width="1"><path d="M7 3 L8.300 6 L11.500 6.300 L9 8.500 L9.800 11.800 L7 10 L4.200 11.800 L5 8.500 L2.500 6.300 L5.700 6Z"/><path d="M1 12 L3 14 M9 .500 V2.500 M8 1.500 H10" /></svg>
  <div class="rt" style="left:129px;top:93px">智能动画</div>
  <div class="abs" style="left:183px;top:98px;border:2.500px solid transparent;border-top:3px solid #c3c3c8;border-bottom:none"></div>
  <div class="rb" style="left:200px;top:88px;width:62px"></div>
  <svg class="abs" style="left:214px;top:92px" width="11" height="12" viewBox="0 0 11 12" fill="none" stroke="#c3c3c8" stroke-width="1"><path d="M.500 2 H10.500 M3.500 2 V.500 H7.500 V2 M1.800 2 V11.500 H9.200 V2 M4 4.500 V9 M7 4.500 V9"/></svg>
  <div class="rt" style="left:227px;top:93px">删除</div>
  <div class="rt" style="left:11px;top:131px;font-size:12.300px;color:#a5a5aa;line-height:14px">修改效果</div>
  <div class="rt" style="left:11px;top:154px">开始:</div><div class="sel" style="top:150px"></div>
  <div class="rt" style="left:11px;top:181px">属性:</div><div class="sel" style="top:176.500px"></div>
  <div class="rt" style="left:11px;top:208px">速度:</div><div class="sel" style="top:203.500px"></div>
  <div class="abs" style="left:11px;top:230px;width:251px;height:172px;background:#fff;border:1px solid #d3d2d7"></div>
  <div class="rt" style="left:11px;top:412px">重新排序</div>
  <div class="rb" style="left:62.500px;top:407px;width:20.500px;height:21px"></div>
  <svg class="abs" style="left:66px;top:411px" width="13" height="13" viewBox="0 0 13 13"><path d="M6.500 0 L12.500 6 H9 V12.500 H4 V6 H.500Z" fill="#d0d0d4"/></svg>
  <div class="rb" style="left:92.500px;top:407px;width:20.500px;height:21px"></div>
  <svg class="abs" style="left:96px;top:411px" width="13" height="13" viewBox="0 0 13 13"><path d="M6.500 13 L12.500 7 H9 V.500 H4 V7 H.500Z" fill="#d0d0d4"/></svg>
  <div class="rb" style="left:11px;top:434px;width:62.500px"></div>
  <svg class="abs" style="left:25px;top:439px" width="11" height="11" viewBox="0 0 11 11"><circle cx="5.500" cy="5.500" r="4.800" fill="none" stroke="#bdbdc2" stroke-width="1"/><path d="M4.200 3.200 L7.800 5.500 L4.200 7.800Z" fill="#bdbdc2"/></svg>
  <div class="rt" style="left:39px;top:439px">播放</div>
  <div class="rb" style="left:79px;top:434px;width:91px"></div>
  <svg class="abs" style="left:89px;top:436px" width="16" height="16" viewBox="0 0 16 16" fill="none" stroke="#bdbdc2" stroke-width="1"><path d="M1 1 H13 M2.500 1 V7"/><circle cx="10" cy="7.500" r="4" fill="#c9c9ce"/><path d="M8.800 5.500 L12 7.500 L8.800 9.500Z" fill="#f6f6f8" stroke="none"/><path d="M5 14 L7.500 11 L10 14Z" fill="#bdbdc2" stroke="none"/></svg>
  <div class="rt" style="left:105px;top:439px">幻灯片播放</div>
  <div class="abs" style="left:12px;top:465px;width:13px;height:13px;border:1px solid #d8d7dc;border-radius:2px;background:#f7f7f8"></div>
  <div class="rt" style="left:27.500px;top:466px">自动预览</div>
</div>
<div id="strip" class="abs">
  <div class="abs" style="left:0;top:489px;width:36px;height:6px;background:#b4b5c1"></div>
  <svg class="abs" style="left:16px;top:490px" width="8" height="4" viewBox="0 0 8 4"><path d="M.500 .500 L4 3.500 L7.500 .500" stroke="#8b8c99" stroke-width="1" fill="none"/></svg>
  <div class="abs" style="left:30.500px;top:469px;width:6px;height:26px;border-radius:3px 3px 0 0;background:#5c5c5f"></div>
  <div class="abs" style="left:30.500px;top:492px;width:6px;height:3px;background:#22a060"></div>
  <svg class="abs" style="left:0;top:0" width="39" height="495" viewBox="0 0 39 495" fill="none" stroke="#444" stroke-width="1.100">
  <g stroke="#d6d5d9"><path d="M13 9 H27 M13 13 H27"/>
  <path d="M20 31 L21.800 35.500 L26.500 36 L23 39 L24 43.500 L20 41 L16 43.500 L17 39 L13.500 36 L18.200 35.500Z"/>
  <path d="M14.500 64.500 H23.500 V73 H14.500Z M18.500 69 H27 V77 H18.500Z M14.500 74 V79"/>
  <path d="M13.500 421 H16.500 L21 417.500 V429.500 L16.500 426 H13.500Z M23.500 420.500 a4 4 0 0 1 0 6 M25.500 418.500 a7 7 0 0 1 0 10"/></g>
  <circle cx="20" cy="100.500" r="5.600"/><path d="M20 97.500 L20.900 99.500 L23 99.700 L21.400 101.100 L21.900 103.200 L20 102.100 L18.100 103.200 L18.600 101.100 L17 99.700 L19.100 99.500Z M17 105.500 V109 L18.500 108 M23 105.500 V109 L21.500 108" stroke-width="1"/>
  <path d="M20 128 L26.500 138.500 H13.500Z M20 132 L22.800 136.500 H17.200Z M14 141.500 H26"/>
  <path d="M13.500 160.500 H26.500 V172.500 H13.500Z M13.500 164.500 H26.500 M13.500 168.500 H26.500 M18 164.500 V172.500 M22.200 164.500 V172.500"/>
  <path d="M13.500 193.500 H18.500 V198 H13.500Z M21.500 193.500 H26.500 V198 H21.500Z M13.500 201 H18.500 V205.500 H13.500Z M21.500 201 H26.500 V205.500 H21.500Z"/><path d="M22 205 L26 201.500" stroke-width="2"/>
  <path d="M13.500 224 V238.500 H27 M16 237 V232.500 H19 V237 M19 232.500 V229.500 H22 V237 M22 229.500 V226 H25 V237"/>
  <path d="M13 257.500 H23 M26.500 257.500 H27 M13 262 H14.500 M18 262 H27 M13 266.500 H15 M19 266.500 H27"/><circle cx="24.800" cy="257.500" r="1.600"/><circle cx="16.200" cy="262" r="1.600"/><circle cx="17" cy="266.500" r="1.600"/>
  <path d="M21 288.500 H14.500 a1 1 0 0 0 -1 1 V299.500 a1 1 0 0 0 1 1 H16 M17.500 292 H26.500 V301.500 H17.500Z M18 300 L21 296.500 L23 298.500 L24.500 297 L26.500 299.500"/><circle cx="23.800" cy="294.500" r=".800"/>
  <path d="M19 322.500 H15 a1 1 0 0 0 -1 1 V332 a1 1 0 0 0 1 1 H24 a1 1 0 0 0 1 -1 V329 M18 329 C18.500 325.500 21 323.500 26 323.500 M23.500 321 L26.500 323.500 L23.500 326"/>
  <path d="M13.500 353 H26.500 V356 H13.500Z M14.500 356 V365 H25.500 V356 M17.500 358.500 V361 H22.500 V358.500"/>
  <path d="M13.500 385 H26.500 V397 H13.500Z M14 394.500 L17.500 390.500 L20.500 393.500 L22.500 391.500 L26 395"/><circle cx="17.500" cy="388.500" r="1"/>
  <path d="M20 449 L26 452.300 V459 L20 462.300 L14 459 V452.300Z"/><path d="M19.500 459 C17.500 458 17.300 455.500 18.200 454 C18.800 455 19.300 455.500 19.800 455.800 C20.300 454.500 21 453.500 22 453 C22.500 455.500 21.800 458 19.500 459Z" fill="#444" stroke="none"/>
</svg>
</div>
<div class="abs" style="left:1010px;top:117px;width:196px;height:6px;background:#000"></div>
</div>
<!-- overlay status icons -->
<div class="abs" style="left:18px;top:135px;width:14px;height:14px;border-radius:50%;background:#2b3555;border:1px solid #f0f0f5"></div>
<div class="abs" style="left:24px;top:138px;width:2px;height:2px;background:#fff;box-shadow:0 3px 0 #fff,0 5px 0 #fff,0 6px 0 #fff"></div>
<svg class="abs" style="left:46px;top:135px" width="11" height="15" viewBox="0 0 11 15"><path d="M2.300 7 V4.500 a3.200 3.200 0 0 1 6.400 0 V7" stroke="#3cc000" stroke-width="1.700" fill="none"/><rect x="0" y="6.500" width="11" height="8.500" rx="1" fill="#3cc000"/><text x="5.500" y="13.300" text-anchor="middle" font-family="Liberation Sans, sans-serif" font-weight="bold" font-size="6.500" fill="#fff">E</text></svg>
<div class="abs" style="left:71px;top:136px;width:12px;height:12px;border-radius:50%;background:radial-gradient(circle at 50% 30%,#f2b0a8 0,#d2473f 35%,#a02a26 80%)"></div>
<div class="t" style="left:91px;top:136px;font-size:10.500px;color:#fff;text-shadow:0 0 1px rgba(255,255,255,.6)">录制</div>
<!-- mute icons -->
<div class="abs" style="left:614px;top:100px;width:17px;height:17px;background:#2e2e2e"></div>
<svg class="abs" style="left:616px;top:101px" width="13" height="15" viewBox="0 0 13 15"><rect x="4.500" y="1" width="4" height="8" rx="2" fill="#e0474c"/><path d="M2.500 7 a4 4 0 0 0 8 0 M6.500 11 V13.500 M4 13.500 H9" stroke="#e0474c" stroke-width="1.100" fill="none"/><path d="M1 14 L12 1" stroke="#ff5a5f" stroke-width="1.200"/></svg>
<div class="abs" style="left:777px;top:100px;width:17px;height:17px;background:#2e2e2e"></div>
<svg class="abs" style="left:779px;top:101px" width="13" height="15" viewBox="0 0 13 15"><rect x="4.500" y="1" width="4" height="8" rx="2" fill="#e0474c"/><path d="M2.500 7 a4 4 0 0 0 8 0 M6.500 11 V13.500 M4 13.500 H9" stroke="#e0474c" stroke-width="1.100" fill="none"/><path d="M1 14 L12 1" stroke="#ff5a5f" stroke-width="1.200"/></svg>
<div id="ztb" class="abs">
  <svg class="abs" style="left:19px;top:8px" width="27" height="22" viewBox="0 0 27 22"><path d="M3.500 20 V12 a10 10 0 0 1 20 0 V20" stroke="#fff" stroke-width="2" fill="none"/><rect x="1.500" y="12.500" width="5" height="8.500" rx="2" fill="#fff"/><rect x="20.500" y="12.500" width="5" height="8.500" rx="2" fill="#fff"/><path d="M13.500 20 V12 M10 15 L13.500 11.500 L17 15" stroke="#4cd42a" stroke-width="2" fill="none"/></svg>
  <div class="zl" style="left:32px">连接语音</div>
  <svg class="abs" style="left:67px;top:17px" width="15" height="9" viewBox="0 0 15 9"><path d="M1.500 7.500 L7.500 1.500 L13.500 7.500" stroke="#fff" stroke-width="1.800" fill="none"/></svg>
  <svg class="abs" style="left:106px;top:5px" width="30" height="28" viewBox="0 0 30 28"><rect x="2" y="6" width="17" height="14" rx="3" fill="#fff"/><path d="M19.500 11 L25.500 7 a1 1 0 0 1 1.500 1 V18 a1 1 0 0 1 -1.500 1 L19.500 15Z" fill="#fff"/><path d="M4 25 L24 2" stroke="#1d1f21" stroke-width="3.500"/><path d="M3 25.500 L25 1.500" stroke="#ff4d4d" stroke-width="1.400"/></svg>
  <div class="zl" style="left:120.500px">启动视频</div>
  <svg class="abs" style="left:422px;top:9px" width="28" height="21" viewBox="0 0 28 21"><circle cx="9.500" cy="5.500" r="4.500" fill="#fff"/><path d="M1 19.500 a8.500 8 0 0 1 17 0 a1 1 0 0 1 -1 1 H2 a1 1 0 0 1 -1 -1Z" fill="#fff"/><path d="M23 5 V12 M19.500 8.500 H26.500" stroke="#fff" stroke-width="1.600"/></svg>
  <div class="zl" style="left:435.500px">邀请</div>
  <svg class="abs" style="left:511px;top:9px" width="29" height="21" viewBox="0 0 29 21"><circle cx="9" cy="5.500" r="4.600" fill="#fff"/><path d="M.500 19.500 a8.500 8 0 0 1 17 0 a1 1 0 0 1 -1 1 H1.500 a1 1 0 0 1 -1 -1Z" fill="#fff"/><circle cx="20.500" cy="6.500" r="3.800" fill="#fff"/><path d="M19.500 20.500 a11 11 0 0 0 -2.500 -7.500 a7 7 0 0 1 10.500 6.500 a1 1 0 0 1 -1 1Z" fill="#fff"/></svg>
  <div class="zn" style="left:544px;top:6px">14</div>
  <div class="zl" style="left:526.500px">参会者</div>
  <div class="abs" style="left:615px;top:9px;width:26px;height:20px;border-radius:3.500px;background:#4cc80d"></div>
  <svg class="abs" style="left:623px;top:13px" width="10" height="12" viewBox="0 0 10 12"><path d="M5 11 V2 M1.200 5.500 L5 1.700 L8.800 5.500" stroke="#0f2a08" stroke-width="1.800" fill="none"/></svg>
  <div class="zl" style="left:628.500px">共享屏幕</div>
  <div class="abs" style="left:670px;top:0;width:78px;height:53px;background:#ff6d00"></div>
  <svg class="abs" style="left:697px;top:9px" width="24" height="21" viewBox="0 0 24 21"><path d="M3.500 .500 H20 a3 3 0 0 1 3 3 V12 a3 3 0 0 1 -3 3 H12 L6.500 20.500 V15 H3.500 a3 3 0 0 1 -3 -3 V3.500 a3 3 0 0 1 3 -3Z" fill="#fff"/></svg>
  <div class="zn" style="left:728.500px;top:6px;font-weight:bold">1</div>
  <div class="zl" style="left:709px">聊天</div>
  <div class="abs" style="left:771px;top:7.500px;width:22px;height:22px;border-radius:50%;border:1.500px solid #fff"></div>
  <div class="abs" style="left:774px;top:10.500px;width:16px;height:16px;border-radius:50%;background:#fff"></div>
  <div class="zl" style="left:782px">录制</div>
  <svg class="abs" style="left:840px;top:5px" width="26" height="26" viewBox="0 0 26 26"><circle cx="10.500" cy="14.500" r="9.500" fill="#fff"/><circle cx="7.500" cy="12.500" r="1.300" fill="#1d1f21"/><circle cx="13.500" cy="12.500" r="1.300" fill="#1d1f21"/><path d="M6 16.500 a4.700 4.700 0 0 0 9 0" stroke="#1d1f21" stroke-width="1.500" fill="none"/><circle cx="19" cy="6" r="5" fill="#1d1f21"/><path d="M19 2 V10 M15 6 H23" stroke="#fff" stroke-width="1.500"/></svg>
  <div class="zl" style="left:849.500px">表情</div>
  <div class="t" style="left:1140.500px;top:19.500px;font-size:15.800px;font-weight:bold;color:#ff3c3c">离开会议</div>
</div>
<div id="frameb" class="abs">
  <div class="abs" style="left:-1px;top:-6px;width:1230px;height:14px;background:#fbfcfd;border:1px solid #777;border-radius:0 0 0 7px"></div>
  <div class="abs" style="left:20px;top:1px;width:120px;height:5px;background:#bfe3f2;filter:blur(3px);opacity:.8"></div>
  <div class="abs" style="left:560px;top:1px;width:90px;height:5px;background:#bfe3f2;filter:blur(3px);opacity:.8"></div>
  <div class="abs" style="left:1150px;top:0px;width:70px;height:5px;background:#bfe3f2;filter:blur(3px);opacity:.8"></div>
  <div class="abs" style="left:782px;top:2px;width:138px;height:5px;background:#4a4a4a;filter:blur(1.500px);opacity:.75"></div>
  <div class="abs" style="left:780px;top:7.500px;width:141px;height:3px;background:#2d2d2b"></div>
</div>
</body>
</html>
